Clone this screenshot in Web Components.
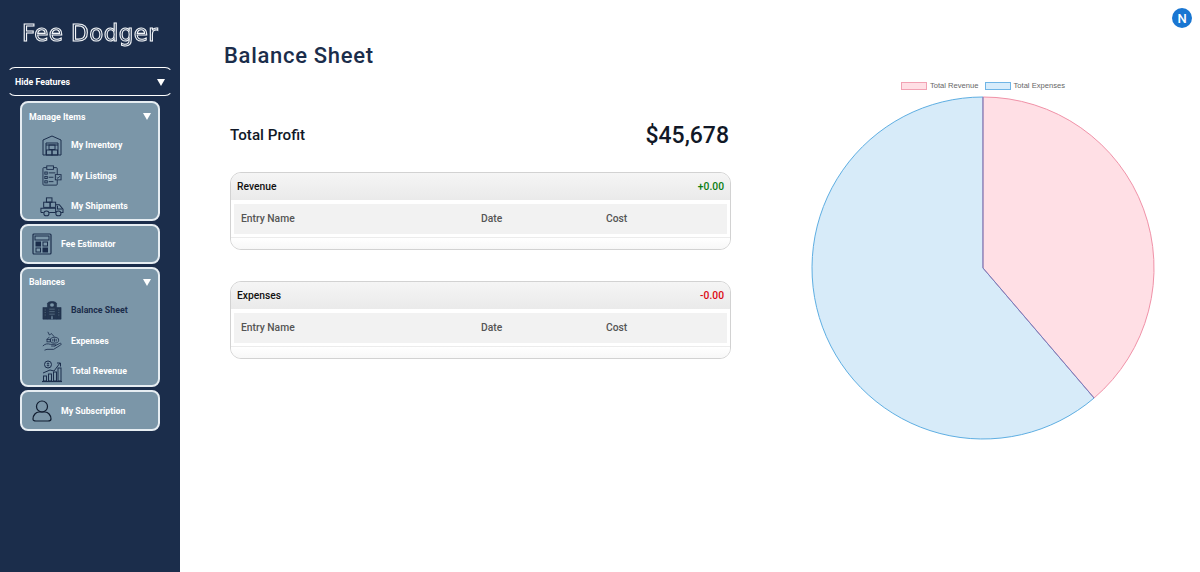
<!DOCTYPE html>
<html>
<head>
<meta charset="utf-8">
<title>Balance Sheet</title>
<style>
    html, body { margin: 0; padding: 0; height: 100%; background: #fff; font-family: Roboto, "Liberation Sans", sans-serif; }
</style>
</head>
<body>
<svg width="0" height="0" style="position:absolute">
    <defs>
        <g id="i-inventory" fill="none" stroke="#1b2d4b" stroke-width="1">
            <path d="M1 5 10 1l9 4v15H1z"/><path d="M4 20V8h12v12M4 10h12"/><rect x="7" y="10" width="6" height="4.500"/><rect x="4.500" y="15" width="5.500" height="5"/><rect x="10" y="15" width="5.500" height="5"/>
        </g>
        <g id="i-listings" fill="none" stroke="#1b2d4b" stroke-width="1">
            <rect x="1" y="3" width="15" height="20" rx="1"/><rect x="5" y="1" width="7" height="4" fill="#7b96a8"/>
            <rect x="3" y="8" width="2.500" height="2.500"/><rect x="3" y="13" width="2.500" height="2.500"/><rect x="3" y="18" width="2.500" height="2.500"/>
            <path d="M7 9h7M7 14h5M7 19h5"/><rect x="14" y="11" width="6" height="6" fill="#7b96a8"/><path d="m15.500 14 1.200 1.300 2-2.500"/>
        </g>
        <g id="i-shipments" fill="none" stroke="#1b2d4b" stroke-width="1.100">
            <rect x="7" y="1" width="6" height="5"/><rect x="4" y="6" width="7" height="6"/><rect x="11" y="6" width="6" height="6"/>
            <path d="M1 18v-5h16v5M17 9h4l4 5v4h-2M1 18h3M10 18h7"/><path d="M19 10v4h5"/><circle cx="7" cy="19" r="2.800"/><circle cx="20" cy="19" r="2.800"/>
        </g>
        <g id="i-calc" fill="none" stroke="#1b2d4b" stroke-width="1">
            <rect x="1" y="1" width="18" height="20" stroke-width="1.200" rx="1"/><rect x="3" y="3" width="14" height="4"/>
            <rect x="4" y="9" width="4.500" height="4" fill="#1b2d4b"/><rect x="11" y="9" width="4.500" height="4"/>
            <rect x="4" y="15" width="4.500" height="4"/><rect x="11" y="15" width="4.500" height="4" fill="#1b2d4b"/>
        </g>
        <g id="i-sheet" fill="#24364f" stroke="#1b2d4b" stroke-width=".6">
            <path d="M1 9h5v14H1zM16 9h5v14h-5z"/><path d="M6 4c1-3 9-3 10 0v19H6z"/><path d="M10 23v-4h2v4" fill="#7b96a8"/>
            <circle cx="11" cy="6" r="2.500" fill="#7b96a8"/><path d="M3 12h1M3 15h1M3 18h1M18 12h1M18 15h1M18 18h1M8 11h6M8 14h6M8 17h6" stroke="#7b96a8"/>
        </g>
        <g id="i-expenses" fill="none" stroke="#1b2d4b" stroke-width="1">
            <path d="M1 18c3-3 6-3 9-2h5c2 0 2 2 0 2h-4"/><path d="M15 18l6-3c2-1 3 1 1 2l-8 5H6l-3 1"/>
            <ellipse cx="15" cy="11" rx="5" ry="3.500"/><path d="M13 9.500v3M15 9v4M17 9.500v3"/><path d="M7 1l2 4 2-2 4 4M9 7l-3 3"/><rect x="6" y="10" width="4" height="3"/>
        </g>
        <g id="i-revenue" fill="none" stroke="#1b2d4b" stroke-width="1">
            <circle cx="6" cy="4.500" r="3.500"/><path d="M6 2.500v4M4.800 3.500h2.400M4.800 5.500h2.400" stroke-width=".7"/><path d="M1 13l7-3 4 1 6-8M15 3h3.500v3.500"/>
            <rect x="1.500" y="16" width="3" height="5"/><rect x="6.500" y="14" width="3" height="7"/><rect x="11.500" y="12" width="3" height="9"/><rect x="16" y="8" width="3" height="13"/><path d="M0 21.500h20" stroke-width="1.200"/>
        </g>
        <g id="i-user" fill="none" stroke="#111d30" stroke-width="1.200">
            <circle cx="10" cy="6.500" r="5.500"/><path d="M1 19c0-4 3-7 6-7h6c3 0 6 3 6 7 0 1.500-1 2-3 2H4c-2 0-3-.5-3-2z"/>
        </g>
    </defs>
</svg>

<fd-app></fd-app>

<script>
class FdNavItem extends HTMLElement {
    constructor() {
        super();
        const icon = this.getAttribute('icon');
        const w = this.getAttribute('w') || 20;
        const h = this.getAttribute('h') || 20;
        const vb = this.getAttribute('vb') || `0 0 ${w} ${h}`;
        this.attachShadow({mode: 'open'}).innerHTML = `
            <style>
                :host { display: flex; align-items: center; height: 30.5px; padding-left: 18px; gap: 8px; color: #fff;
                    font: 700 8.8px Roboto, sans-serif; }
                :host([active]) { color: #1b2d4b; }
                .ico { width: 23px; display: flex; justify-content: center; }
                svg { display: block; overflow: visible; }
            </style>
            <div class="ico"><svg width="${w}" height="${h}" viewBox="${vb}" preserveAspectRatio="none">${document.getElementById(icon).outerHTML}</svg></div>
            <slot></slot>
        `;
    }
}
customElements.define('fd-nav-item', FdNavItem);

class FdNavCard extends HTMLElement {
    constructor() {
        super();
        const icon = this.getAttribute('icon');
        this.attachShadow({mode: 'open'}).innerHTML = `
            <style>
                :host { display: flex; align-items: center; margin: 0 20px; height: 36px; padding-left: 10px; gap: 9px;
                    background: #7b96a8; border: 2px solid #e6edf2; border-radius: 8px; color: #fff;
                    font: 700 8.8px Roboto, sans-serif; }
                :host([tall]) { height: 37px; }
                svg { display: block; overflow: visible; }
            </style>
            <svg width="20" height="22" viewBox="0 0 20 22">${document.getElementById(icon).outerHTML}</svg>
            <slot></slot>
        `;
    }
}
customElements.define('fd-nav-card', FdNavCard);

class FdNavGroup extends HTMLElement {
    constructor() {
        super();
        this.attachShadow({mode: 'open'}).innerHTML = `
            <style>
                :host { display: block; margin: 0 20px; height: 116px; background: #7b96a8; border: 2px solid #e6edf2;
                    border-radius: 8px; color: #fff; font: 700 8.8px Roboto, sans-serif; }
                header { display: flex; justify-content: space-between; align-items: center; height: 27px; padding: 0 7px; }
                :host([compact]) header { height: 26px; }
                .arrow { width: 0; height: 0; border: 4px solid transparent; border-top: 7px solid #fff; border-bottom: 0; }
            </style>
            <header><span>${this.getAttribute('label')}</span><i class="arrow"></i></header>
            <slot></slot>
        `;
    }
}
customElements.define('fd-nav-group', FdNavGroup);

class FdSidebar extends HTMLElement {
    constructor() {
        super();
        this.attachShadow({mode: 'open'}).innerHTML = `
            <style>
                :host { display: flex; flex-direction: column; gap: 3px; width: 180px; flex: none; height: 572px;
                    box-sizing: border-box; background: #1b2d4b; }
                .logo { height: 64px; display: flex; justify-content: center; align-items: center; padding-top: 2px; box-sizing: border-box;
                    font: 400 23px "DejaVu Sans", sans-serif; letter-spacing: .4px; color: #1b2d4b; will-change: transform;
                    -webkit-text-stroke: 1.100px #f2f5f8; white-space: nowrap; }
                .hide { display: flex; justify-content: space-between; align-items: center; margin: 0 7px 2px; height: 29px; box-sizing: border-box;
                    padding: 1px 7px 0; border: solid #fff; border-width: 1.500px 1px; border-left-color: transparent;
                    border-right-color: transparent; border-radius: 8px; color: #fff; font: 700 8.8px Roboto, sans-serif; }
                .arrow { width: 0; height: 0; border: 4px solid transparent; border-top: 7px solid #fff; border-bottom: 0; }
            </style>
            <div class="logo">Fee Dodger</div>
            <div class="hide"><span>Hide Features</span><i class="arrow"></i></div>
            <fd-nav-group label="Manage Items">
                <fd-nav-item icon="i-inventory" w="20" h="21">My Inventory</fd-nav-item>
                <fd-nav-item icon="i-listings" w="20" h="21" vb="0 0 21 24">My Listings</fd-nav-item>
                <fd-nav-item icon="i-shipments" w="23" h="19" vb="0 0 25 22">My Shipments</fd-nav-item>
            </fd-nav-group>
            <fd-nav-card icon="i-calc">Fee Estimator</fd-nav-card>
            <fd-nav-group label="Balances" compact>
                <fd-nav-item icon="i-sheet" w="20" h="20" vb="0 0 22 24" active>Balance Sheet</fd-nav-item>
                <fd-nav-item icon="i-expenses" w="20" h="20" vb="0 0 24 24">Expenses</fd-nav-item>
                <fd-nav-item icon="i-revenue" w="20" h="22">Total Revenue</fd-nav-item>
            </fd-nav-group>
            <fd-nav-card icon="i-user" tall>My Subscription</fd-nav-card>
        `;
    }
}
customElements.define('fd-sidebar', FdSidebar);

class FdLedger extends HTMLElement {
    constructor() {
        super();
        const colour = this.getAttribute('tone') === 'up' ? '#0a7d12' : '#dc0a14';
        this.attachShadow({mode: 'open'}).innerHTML = `
            <style>
                :host { display: block; box-sizing: border-box; height: 78px; border: 1px solid #d2d2d2; border-radius: 11px;
                    overflow: hidden; background: #fff; font-family: Roboto, sans-serif; }
                header { display: flex; justify-content: space-between; align-items: center; height: 27px; padding: 0 6px;
                    background: linear-gradient(#f5f5f5, #eaeaea); font: 500 10.3px Roboto, sans-serif; color: #111; }
                .sum { color: ${colour}; font-weight: 500; }
                .body { padding: 4px 3px 0; }
                .row { display: grid; grid-template-columns: 240px 125px 1fr; align-items: center; height: 30px; padding-left: 7px;
                    background: #f2f2f2; font: 500 10.3px Roboto, sans-serif; color: #555; padding-bottom: 1px; box-sizing: border-box; }
                .foot { height: 13px; margin-top: 3px; border-top: 1px solid #ececec; background: linear-gradient(#fff, #f6f6f6); }
            </style>
            <header><span>${this.getAttribute('label')}</span><span class="sum">${this.getAttribute('sum')}</span></header>
            <div class="body">
                <div class="row"><span>Entry Name</span><span>Date</span><span>Cost</span></div>
            </div>
            <div class="foot"></div>
        `;
    }
}
customElements.define('fd-ledger', FdLedger);

class FdPie extends HTMLElement {
    constructor() {
        super();
        const a = 139.5 * Math.PI / 180;
        const r = 171;
        const x = (172 + r * Math.sin(a)).toFixed(1);
        const y = (172 - r * Math.cos(a)).toFixed(1);
        this.attachShadow({mode: 'open'}).innerHTML = `
            <style>
                :host { display: block; width: 344px; font: 7.6px "Liberation Sans", sans-serif; color: #666; }
                .legend { display: flex; justify-content: center; gap: 6px; height: 9px; margin: 0 0 6px; align-items: center; white-space: nowrap; }
                .legend span { display: flex; align-items: center; gap: 3px; }
                .legend i { display: block; box-sizing: border-box; width: 26px; height: 8px; border: 1px solid; }
                .rev { background: #ffdfe5; border-color: #f2a2b4 !important; }
                .exp { background: #d7ecfb; border-color: #6fb5e6 !important; }
                svg { display: block; overflow: visible; }
            </style>
            <div class="legend">
                <span><i class="rev"></i>Total Revenue</span>
                <span><i class="exp"></i>Total Expenses</span>
            </div>
            <svg width="344" height="344" viewBox="0 0 344 344">
                <path d="M172 172V1A171 171 0 1 0 ${x} ${y}Z" fill="#d7ebf9" stroke="#5eaee2" stroke-width="1"/>
                <path d="M172 172V1A171 171 0 0 1 ${x} ${y}Z" fill="#ffdfe5" stroke="#f092a8" stroke-width="1"/>
                <path d="M172 1V172L${x} ${y}" fill="none" stroke="#6f7fc0" stroke-width="1"/>
            </svg>
        `;
    }
}
customElements.define('fd-pie', FdPie);

class FdApp extends HTMLElement {
    constructor() {
        super();
        this.attachShadow({mode: 'open'}).innerHTML = `
            <style>
                :host { display: flex; height: 572px; overflow: hidden; font-family: Roboto, sans-serif; position: relative; }
                main { flex: 1; display: grid; grid-template-columns: 501px 344px; column-gap: 80px; padding: 0 0 0 50px; align-content: start; }
                h1 { grid-column: 1 / -1; margin: 0 0 0 -6px; padding-top: 41px; height: 39px; font: 500 22px/29px Roboto, sans-serif;
                    letter-spacing: .7px; color: #1b2d4b; }
                .col { display: flex; flex-direction: column; }
                .profit { display: flex; justify-content: space-between; align-items: center; height: 52px; margin: 0 2px 0 0; color: #111827; }
                .profit b { font: 500 15.2px Roboto, sans-serif; }
                .profit strong { font: 500 23px Roboto, sans-serif; }
                .avatar { position: absolute; top: 8px; right: 8px; width: 20px; height: 20px; border-radius: 50%; background: #1976d2;
                    color: #fff; display: flex; align-items: center; justify-content: center; font: 500 13px Roboto, sans-serif; }
                .second { margin-top: 31px; }
                .first { margin-top: 11px; }
                .left { padding-top: 29px; }
                .right { margin-top: 1px; }
            </style>
            <fd-sidebar></fd-sidebar>
            <main>
                <h1>Balance Sheet</h1>
                <div class="col left">
                    <div class="profit"><b>Total Profit</b><strong>$45,678</strong></div>
                    <fd-ledger class="first" label="Revenue" sum="+0.00" tone="up"></fd-ledger>
                    <fd-ledger class="second" label="Expenses" sum="-0.00" tone="down"></fd-ledger>
                </div>
                <div class="right"><fd-pie></fd-pie></div>
            </main>
            <div class="avatar">N</div>
        `;
    }
}
customElements.define('fd-app', FdApp);
</script>
</body>
</html>
